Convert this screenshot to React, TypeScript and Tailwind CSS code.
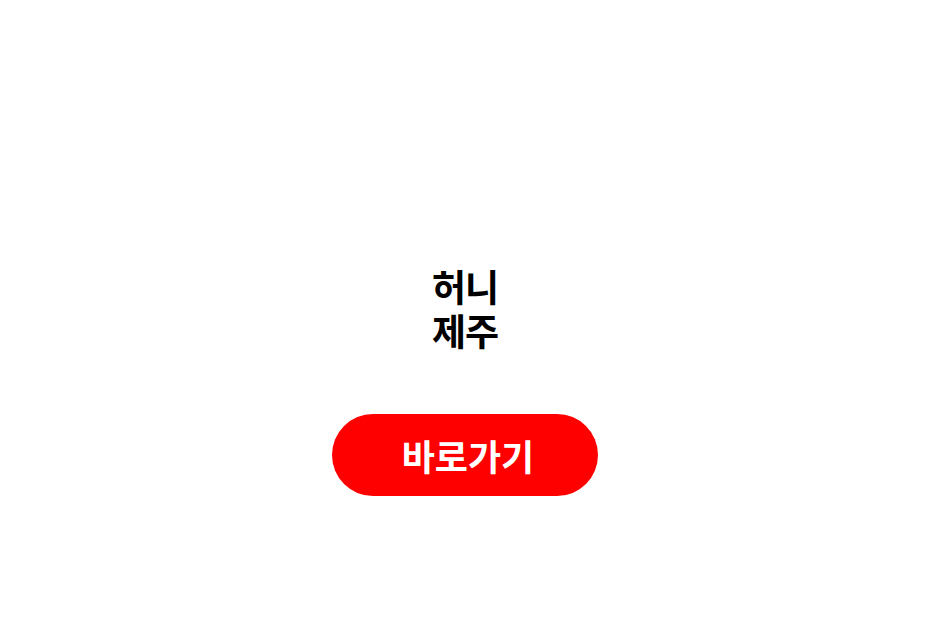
export default function App() {
  return (
    <main
      className="flex min-h-[620px] w-full flex-col items-center bg-white pt-[264px]"
      style={{ fontFamily: '"Noto Sans CJK KR", "Noto Sans", sans-serif' }}
    >
      <h1 className="flex flex-col items-center text-[37px] font-bold leading-[44px] tracking-[-1px] text-black">
        <span>허니</span>
        <span>제주</span>
      </h1>
      <a
        href="#"
        className="mt-[62px] flex h-[82px] w-[266px] items-center justify-center rounded-full bg-[#ff0000] pl-[6px] text-[36px] font-semibold text-white"
      >
        바로가기
      </a>
    </main>
  );
}
